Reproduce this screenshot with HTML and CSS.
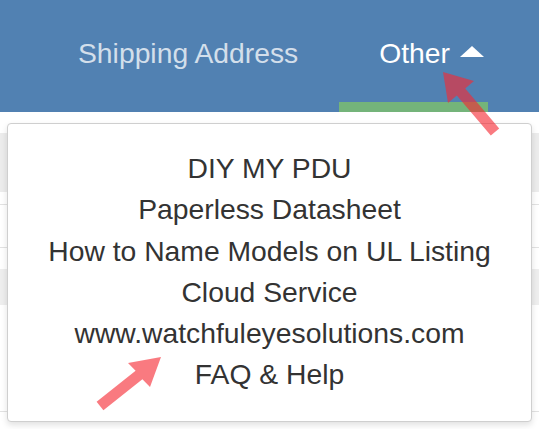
FILE: index.html
```html
<!DOCTYPE html>
<html lang="en">

<head>
    <meta charset="UTF-8">
    <meta name="viewport" content="width=device-width, initial-scale=1.0">
    <title>Other menu</title>
    <link rel="stylesheet" href="styles.css">
</head>

<body>
    <div class="header">
        <div class="nav">
            <a class="nav-item">Shipping Address</a>
            <a class="nav-item active">Other<span class="caret"></span></a>
        </div>
        <div class="indicator"></div>
    </div>
    <div class="content">
        <div class="table">
            <div class="row head"></div>
            <div class="row line"></div>
            <div class="row line short"></div>
            <div class="row band"></div>
            <div class="row last"></div>
        </div>
        <ul class="dropdown">
            <li>DIY MY PDU</li>
            <li>Paperless Datasheet</li>
            <li>How to Name Models on UL Listing</li>
            <li>Cloud Service</li>
            <li>www.watchfuleyesolutions.com</li>
            <li>FAQ &amp; Help</li>
        </ul>
    </div>
    <svg class="marks" width="539" height="429" viewBox="0 0 539 429">
        <polygon points="443,72 474,81 465.2,88.4 499.2,128.4 490.8,135.6 456.8,95.6 448,103" />
        <polygon points="161,357 150,387 142.4,379.3 103.4,410.3 96.6,401.7 135.6,370.7 128,363" />
    </svg>
</body>

</html>
```

FILE: styles.css
```css
body {
    font-family: "Liberation Sans", Arial, sans-serif;
    margin: 0;
    padding: 0;
    width: 539px;
    height: 429px;
    overflow: hidden;
    position: relative;
    background-color: #fff;
}

.header {
    background-color: #5181b2;
    height: 112px;
}

.nav {
    display: flex;
    align-items: flex-start;
    height: 102px;
    box-sizing: border-box;
    padding: 37px 0 0 78px;
    gap: 81px;
}

.nav-item {
    font-size: 28.3px;
    line-height: 32px;
    color: rgba(255, 255, 255, 0.75);
    white-space: nowrap;
}

.nav-item.active {
    color: #fff;
}

.caret {
    display: inline-block;
    width: 0;
    height: 0;
    margin-left: 10px;
    vertical-align: 6px;
    border-left: 12px solid transparent;
    border-right: 12px solid transparent;
    border-bottom: 11px solid #fff;
}

.indicator {
    margin-left: 339px;
    width: 149px;
    height: 10px;
    background-color: #74b47a;
}

.content {
    position: relative;
    height: 317px;
}

.table {
    padding-top: 21px;
}

.row.head {
    height: 59px;
    background-color: #ececec;
}

.row.line {
    height: 12px;
    border-bottom: 1px solid #e2e2e2;
}

.row.short {
    height: 42px;
}

.row.band {
    margin-top: 21px;
    height: 36px;
    background-color: #eeeeee;
}

.row.last {
    height: 106px;
    border-bottom: 1px solid #e2e2e2;
}

.dropdown {
    position: absolute;
    top: 11px;
    left: 7px;
    width: 525px;
    height: 299px;
    box-sizing: border-box;
    margin: 0;
    padding: 24px 0 0;
    list-style: none;
    background-color: #fff;
    border: 1px solid #cfcfcf;
    border-radius: 4px;
    box-shadow: 0 3px 6px rgba(0, 0, 0, 0.12);
    text-align: center;
}

.dropdown li {
    font-size: 28.3px;
    line-height: 41.3px;
    color: #333;
}

.marks {
    position: absolute;
    top: 0;
    left: 0;
    pointer-events: none;
}

.marks polygon {
    fill: rgba(245, 40, 50, 0.62);
}
```
